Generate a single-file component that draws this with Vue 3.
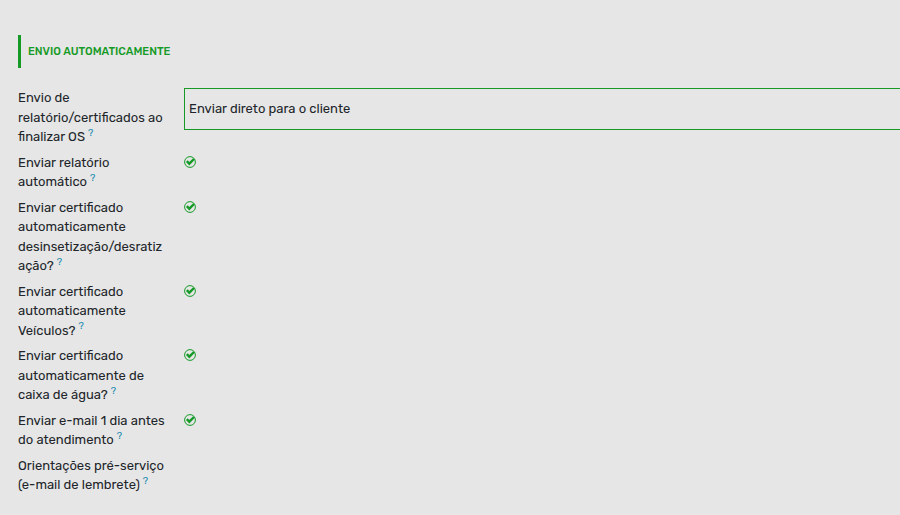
<template>
  <form class="settings" @submit.prevent>
    <h2 class="section-title">Envio automaticamente</h2>

    <div class="row">
      <div class="label">
        <label for="envio">{{ sendLabel }}</label>
        <sup><a href="#ajuda-envio">?</a></sup>
      </div>
      <div class="field">
        <select id="envio" v-model="sendMode" class="select">
          <option value="cliente">Enviar direto para o cliente</option>
        </select>
      </div>
    </div>

    <div v-for="item in options" :key="item.id" class="row">
      <div class="label">
        <label :for="item.id">{{ item.label }}</label>
        <sup><a :href="'#ajuda-' + item.id">?</a></sup>
      </div>
      <div class="field">
        <span class="check">
          <input :id="item.id" v-model="item.checked" type="checkbox" />
          <svg viewBox="0 0 12 12" aria-hidden="true">
            <circle cx="6" cy="6" r="5.4" />
            <path v-if="item.checked" d="M2.8 5.2 L5.3 7.7 L10 3" />
          </svg>
        </span>
      </div>
    </div>

    <div class="row">
      <div class="label">
        <span>{{ guidanceLabel }}</span>
        <sup><a href="#ajuda-orientacoes">?</a></sup>
      </div>
    </div>
  </form>
</template>

<script setup>
import { ref } from 'vue'

const sendMode = ref('cliente')
const sendLabel = 'Envio de\nrelatório/certificados ao\nfinalizar OS'
const guidanceLabel = 'Orientações pré-serviço\n(e-mail de lembrete)'

const options = ref([
  { id: 'relatorio', label: 'Enviar relatório\nautomático', checked: true },
  {
    id: 'desinsetizacao',
    label: 'Enviar certificado\nautomaticamente\ndesinsetização/desratiz\nação?',
    checked: true,
  },
  { id: 'veiculos', label: 'Enviar certificado\nautomaticamente\nVeículos?', checked: true },
  { id: 'caixa', label: 'Enviar certificado\nautomaticamente de\ncaixa de água?', checked: true },
  { id: 'lembrete', label: 'Enviar e-mail 1 dia antes\ndo atendimento', checked: true },
])
</script>

<style>
body {
  background: #e6e6e6;
}
</style>

<style scoped>
.settings {
  display: flex;
  flex-direction: column;
  gap: 6px;
  padding: 35px 0 20px 18px;
  overflow: hidden;
  font-family: Rubik, Roboto, sans-serif;
  font-size: 13px;
  line-height: 1.5;
  color: #212529;
}

.section-title {
  margin: 0 0 14px;
  padding-left: 7px;
  border-left: 3px solid #159a26;
  font-size: 11px;
  font-weight: 500;
  line-height: 33px;
  color: #159a26;
  text-transform: uppercase;
}

.row {
  display: grid;
  grid-template-columns: 148px 1fr;
  column-gap: 18px;
}

.label {
  white-space: nowrap;
}

.label label,
.label span {
  white-space: pre-line;
}

sup {
  margin-left: 3px;
  font-size: 10px;
  line-height: 0;
}

sup a {
  color: #1a8ab0;
  text-decoration: none;
}

/* the select runs past the right edge of the panel */
.select {
  display: block;
  width: calc(100% + 24px);
  height: 42px;
  margin: 0;
  padding: 0 4px;
  border: 1px solid #159a26;
  border-radius: 0;
  appearance: none;
  background: transparent;
  font: inherit;
  color: inherit;
}

.check {
  display: grid;
  width: 12px;
  height: 12px;
  margin-top: 3px;
}

.check input,
.check svg {
  grid-area: 1 / 1;
  width: 12px;
  height: 12px;
  margin: 0;
}

.check input {
  appearance: none;
}

.check svg {
  fill: none;
  stroke: #159a26;
  pointer-events: none;
}

.check path {
  stroke-width: 2.4;
}
</style>
